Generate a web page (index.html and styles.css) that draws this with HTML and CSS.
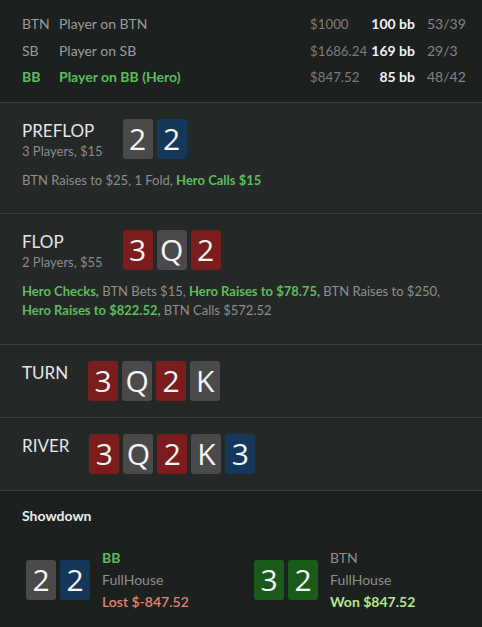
FILE: index.html
```html
<!DOCTYPE html>
<html>
<head>
<meta charset="utf-8">
<link rel="stylesheet" href="styles.css">
</head>
<body>
<div class="players">
  <div class="prow">
    <span class="pos">BTN</span><span class="name">Player on BTN</span><span class="money">$1000</span><span class="bb">100 bb</span><span class="stat">53/39</span>
  </div>
  <div class="prow">
    <span class="pos">SB</span><span class="name">Player on SB</span><span class="money">$1686.24</span><span class="bb">169 bb</span><span class="stat">29/3</span>
  </div>
  <div class="prow hero">
    <span class="pos">BB</span><span class="name">Player on BB (Hero)</span><span class="money">$847.52</span><span class="bb">85 bb</span><span class="stat">48/42</span>
  </div>
</div>

<section class="street">
  <div class="head">
    <div class="title">
      <div class="label">PREFLOP</div>
      <div class="sub">3 Players, $15</div>
    </div>
    <div class="cards">
      <span class="card c-grey">2</span><span class="card c-blue">2</span>
    </div>
  </div>
  <p class="actions">BTN Raises to $25, 1 Fold, <b class="hl">Hero Calls $15</b></p>
</section>

<section class="street">
  <div class="head">
    <div class="title">
      <div class="label">FLOP</div>
      <div class="sub">2 Players, $55</div>
    </div>
    <div class="cards">
      <span class="card c-red">3</span><span class="card c-grey">Q</span><span class="card c-red">2</span>
    </div>
  </div>
  <p class="actions"><b class="hl">Hero Checks,</b> BTN Bets $15, <b class="hl">Hero Raises to $78.75,</b> BTN Raises to $250, <b class="hl">Hero Raises to $822.52,</b> BTN Calls $572.52</p>
</section>

<section class="street short">
  <div class="head">
    <div class="title"><div class="label">TURN</div></div>
    <div class="cards">
      <span class="card c-red">3</span><span class="card c-grey">Q</span><span class="card c-red">2</span><span class="card c-grey">K</span>
    </div>
  </div>
</section>

<section class="street short">
  <div class="head">
    <div class="title"><div class="label">RIVER</div></div>
    <div class="cards">
      <span class="card c-red">3</span><span class="card c-grey">Q</span><span class="card c-red">2</span><span class="card c-grey">K</span><span class="card c-blue">3</span>
    </div>
  </div>
</section>

<section class="showdown">
  <h3 class="sd-title">Showdown</h3>
  <div class="sd-grid">
    <div class="sd-item">
      <div class="cards">
        <span class="card c-grey">2</span><span class="card c-blue">2</span>
      </div>
      <div class="sd-info">
        <div class="sd-pos hl">BB</div>
        <div class="sd-hand">FullHouse</div>
        <div class="sd-lost">Lost $-847.52</div>
      </div>
    </div>
    <div class="sd-item">
      <div class="cards">
        <span class="card c-green">3</span><span class="card c-green">2</span>
      </div>
      <div class="sd-info">
        <div class="sd-pos">BTN</div>
        <div class="sd-hand">FullHouse</div>
        <div class="sd-won">Won $847.52</div>
      </div>
    </div>
  </div>
</section>
</body>
</html>
```

FILE: styles.css
```css
* { box-sizing: border-box; }
html, body { margin: 0; padding: 0; }
body {
  width: 482px;
  height: 627px;
  overflow: hidden;
  background: #1c201e;
  font-family: Lato, "Liberation Sans", sans-serif;
  font-size: 14px;
  color: #9a9a9a;
}

.players {
  padding: 11px 20px 11.5px 22px;
  background: #1c201e;
  border-bottom: 1px solid #3a3e3d;
}
.prow {
  display: grid;
  grid-template-columns: 37px 1fr 58px 47px 47px;
  line-height: 26.5px;
  height: 26.5px;
  white-space: nowrap;
}
.pos, .name { color: #9c9c9c; }
.money { color: #7d7d7d; font-size: 13.3px; }
.bb { color: #f2f2f2; font-weight: 700; text-align: right; }
.stat { color: #858585; padding-left: 12px; }
.prow.hero .pos, .prow.hero .name { color: #5cbd5c; font-weight: 700; }

.street {
  background: #242827;
  padding: 16px 20px 23px 22px;
  border-bottom: 1px solid #3a3e3d;
}
.street.short { padding-bottom: 16px; }
.head {
  display: flex;
  align-items: flex-start;
  gap: 20px;
  height: 40px;
}
.title { min-width: 44px; }
.label {
  font-size: 17px;
  line-height: 20px;
  margin-top: 2px;
  color: #e6e6e6;
}
.sub {
  font-size: 13px;
  line-height: 20px;
  margin-top: 0;
  color: #8c8c8c;
}
.cards { display: flex; gap: 4px; }
.card {
  width: 30px;
  height: 40px;
  border-radius: 3px;
  display: flex;
  align-items: center;
  justify-content: center;
  font-family: "Open Sans", Lato, sans-serif;
  font-weight: 400;
  font-size: 30px;
  line-height: 1;
  color: #f5f5f5;
}
.c-grey { background: #4a4a4a; }
.c-red { background: #7b1d1d; }
.c-blue { background: #15375a; }
.c-green { background: #1a5b1a; }

.actions {
  margin: 11.5px 0 0;
  font-size: 13px;
  line-height: 19.5px;
  color: #8f8f8f;
}
.hl { color: #5cbd5c; font-weight: 700; }

.showdown {
  background: #1c201e;
  padding: 15px 0 0 0;
}
.sd-title {
  margin: 0 0 0 22px;
  font-size: 14px;
  font-weight: 700;
  line-height: 20px;
  color: #ececec;
}
.sd-grid {
  display: grid;
  grid-template-columns: 1fr 1fr;
  padding-left: 26px;
  margin-top: 21px;
}
.sd-item {
  display: flex;
  align-items: center;
  gap: 12px;
}
.sd-info { line-height: 22px; }
.sd-pos { color: #8f8f8f; }
.sd-pos.hl { color: #5cbd5c; font-weight: 700; }
.sd-hand { color: #8f8f8f; }
.sd-lost { color: #e8806d; font-weight: 600; }
.sd-won { color: #b8e68a; font-weight: 700; }
```
